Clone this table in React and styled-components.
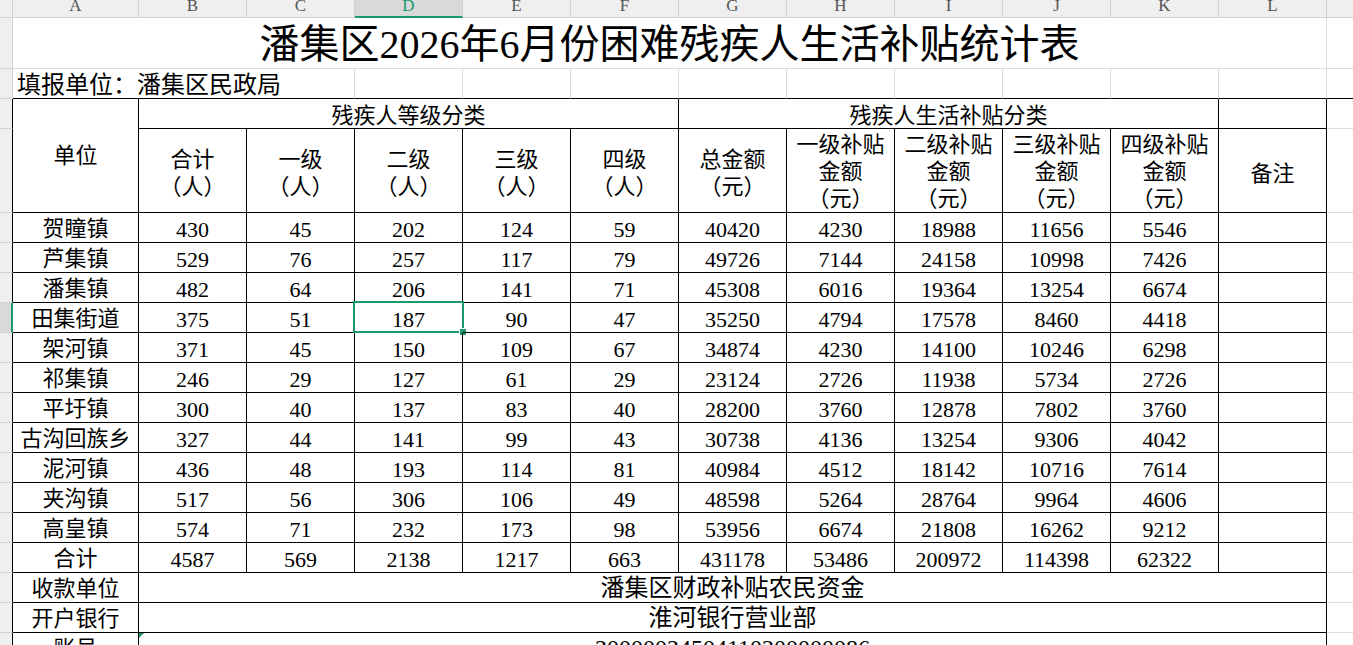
import React from 'react';
import styled, { createGlobalStyle } from 'styled-components';

const GRID = '#dcdcdc';
const HEAD_LINE = '#d2d2d2';
const LINE = '#000';
const GREEN = '#1a9a6b';

const GlobalStyle = createGlobalStyle`
  html, body {
    margin: 0;
    padding: 0;
    background: #fff;
    overflow: hidden;
  }
  body {
    font-family: "Liberation Serif", "Noto Sans CJK SC", serif;
    color: #000;
  }
`;

const Sheet = styled.div`
  display: grid;
  grid-template-columns: 13px 126px repeat(11, 108px) 1fr;
  grid-template-rows: 18px 51px 30px 30px 84px repeat(15, 30px);
  width: 1353px;
  height: 645px;
  overflow: hidden;
  box-sizing: border-box;

  * {
    box-sizing: border-box;
  }
`;

// column letters bar
const Corner = styled.div`
  background: #efefef;
  border-right: 1px solid ${HEAD_LINE};
  border-bottom: 1px solid ${HEAD_LINE};
`;

const ColHead = styled.div`
  background: ${(p) => (p.$active ? '#d9d9d9' : '#efefef')};
  border-right: ${(p) => (p.$filler ? 'none' : `1px solid ${HEAD_LINE}`)};
  border-bottom: ${(p) => (p.$active ? `2px solid ${GREEN}` : `1px solid ${HEAD_LINE}`)};
  color: ${(p) => (p.$active ? GREEN : '#555')};
  font-family: "Liberation Serif", serif;
  font-size: 17px;
  line-height: 16px;
  text-align: center;
  overflow: hidden;

  span {
    display: block;
    margin-top: -2px;
  }
`;

// row number strip (too narrow to show numbers)
const RowHead = styled.div`
  background: ${(p) => (p.$active ? '#d9d9d9' : '#efefef')};
  border-bottom: 1px solid ${HEAD_LINE};
  border-right: ${(p) =>
    p.$active ? `2px solid ${GREEN}` : `1px solid ${p.$edge ? LINE : HEAD_LINE}`};
`;

const Cell = styled.div`
  grid-column: span ${(p) => p.$span || 1};
  grid-row: span ${(p) => p.$rows || 1};
  position: relative;
  display: flex;
  align-items: center;
  justify-content: center;
  text-align: center;
  white-space: nowrap;
  font-size: ${(p) => p.$size || 22}px;
  line-height: 27px;
  padding-top: ${(p) => (p.$pad === undefined ? 2 : p.$pad)}px;
  border-right: 1px solid ${(p) => p.$right || LINE};
  border-bottom: 1px solid ${(p) => p.$bottom || LINE};
`;

const TitleCell = styled(Cell)`
  font-size: 40px;
  line-height: 46px;
  padding-top: 3px;
  border-right-color: ${GRID};
  border-bottom-color: ${GRID};
`;

const ReportCell = styled(Cell)`
  justify-content: flex-start;
  padding-left: 4px;
  padding-top: 4px;
  font-size: 24px;
  border-right-color: ${GRID};
`;

const HeadCell = styled(Cell)`
  white-space: pre-line;
  padding-top: ${(p) => (p.$pad === undefined ? 4 : p.$pad)}px;
`;

const Filler = styled.div`
  border-bottom: 1px solid ${(p) => (p.$bottom ? LINE : GRID)};
`;

const Selection = styled.div`
  position: absolute;
  top: -2px;
  left: -2px;
  right: -2px;
  bottom: -1px;
  border: 2px solid ${GREEN};
  pointer-events: none;

  &::after {
    content: '';
    position: absolute;
    right: -5px;
    bottom: -5px;
    width: 6px;
    height: 6px;
    background: ${GREEN};
    border: 1px solid #fff;
  }
`;

const TextFlag = styled.span`
  position: absolute;
  top: 0;
  left: 0;
  width: 0;
  height: 0;
  border-top: 5px solid ${GREEN};
  border-right: 5px solid transparent;
`;

const columns = ['A', 'B', 'C', 'D', 'E', 'F', 'G', 'H', 'I', 'J', 'K', 'L'];

const headers = [
  '合计\n（人）',
  '一级\n（人）',
  '二级\n（人）',
  '三级\n（人）',
  '四级\n（人）',
  '总金额\n（元）',
  '一级补贴\n金额\n（元）',
  '二级补贴\n金额\n（元）',
  '三级补贴\n金额\n（元）',
  '四级补贴\n金额\n（元）',
];

const rows = [
  ['贺瞳镇', 430, 45, 202, 124, 59, 40420, 4230, 18988, 11656, 5546],
  ['芦集镇', 529, 76, 257, 117, 79, 49726, 7144, 24158, 10998, 7426],
  ['潘集镇', 482, 64, 206, 141, 71, 45308, 6016, 19364, 13254, 6674],
  ['田集街道', 375, 51, 187, 90, 47, 35250, 4794, 17578, 8460, 4418],
  ['架河镇', 371, 45, 150, 109, 67, 34874, 4230, 14100, 10246, 6298],
  ['祁集镇', 246, 29, 127, 61, 29, 23124, 2726, 11938, 5734, 2726],
  ['平圩镇', 300, 40, 137, 83, 40, 28200, 3760, 12878, 7802, 3760],
  ['古沟回族乡', 327, 44, 141, 99, 43, 30738, 4136, 13254, 9306, 4042],
  ['泥河镇', 436, 48, 193, 114, 81, 40984, 4512, 18142, 10716, 7614],
  ['夹沟镇', 517, 56, 306, 106, 49, 48598, 5264, 28764, 9964, 4606],
  ['高皇镇', 574, 71, 232, 173, 98, 53956, 6674, 21808, 16262, 9212],
  ['合计', 4587, 569, 2138, 1217, 663, 431178, 53486, 200972, 114398, 62322],
];

const footer = [
  ['收款单位', '潘集区财政补贴农民资金'],
  ['开户银行', '淮河银行营业部'],
  ['账号', '20000024504110200000086'],
];

const SELECTED_ROW = 3;
const SELECTED_COL = 3; // D

export default function App() {
  return (
    <>
      <GlobalStyle />
      <Sheet>
        <Corner />
        {columns.map((c) => (
          <ColHead key={c} $active={c === 'D'}>
            <span>{c}</span>
          </ColHead>
        ))}
        <ColHead $filler />

        <RowHead />
        <TitleCell $span={12}>潘集区2026年6月份困难残疾人生活补贴统计表</TitleCell>
        <Filler />

        <RowHead />
        <ReportCell $span={3}>填报单位：潘集区民政局</ReportCell>
        {columns.slice(3).map((c) => (
          <Cell key={c} $right={GRID} />
        ))}
        <Filler $bottom />

        <RowHead $edge />
        <HeadCell $rows={2} $pad={0}>单位</HeadCell>
        <HeadCell $span={5}>残疾人等级分类</HeadCell>
        <HeadCell $span={5}>残疾人生活补贴分类</HeadCell>
        <HeadCell />
        <Filler />

        <RowHead $edge />
        {headers.map((h) => (
          <HeadCell key={h} $pad={h.split('\n').length > 2 ? 2 : 5}>
            {h}
          </HeadCell>
        ))}
        <HeadCell $pad={6}>备注</HeadCell>
        <Filler />

        {rows.map((r, i) => (
          <React.Fragment key={r[0]}>
            <RowHead $edge $active={i === SELECTED_ROW} />
            {r.map((v, j) => (
              <Cell key={j} $pad={j === 0 ? 1 : 3}>
                {v}
                {i === SELECTED_ROW && j === SELECTED_COL && <Selection />}
              </Cell>
            ))}
            <Cell />
            <Filler />
          </React.Fragment>
        ))}

        {footer.map(([label, value], i) => (
          <React.Fragment key={label}>
            <RowHead $edge />
            <Cell $pad={1}>{label}</Cell>
            <Cell $span={11} $size={24} $pad={2}>
              {i === footer.length - 1 && <TextFlag />}
              {value}
            </Cell>
            <Filler />
          </React.Fragment>
        ))}
      </Sheet>
    </>
  );
}
